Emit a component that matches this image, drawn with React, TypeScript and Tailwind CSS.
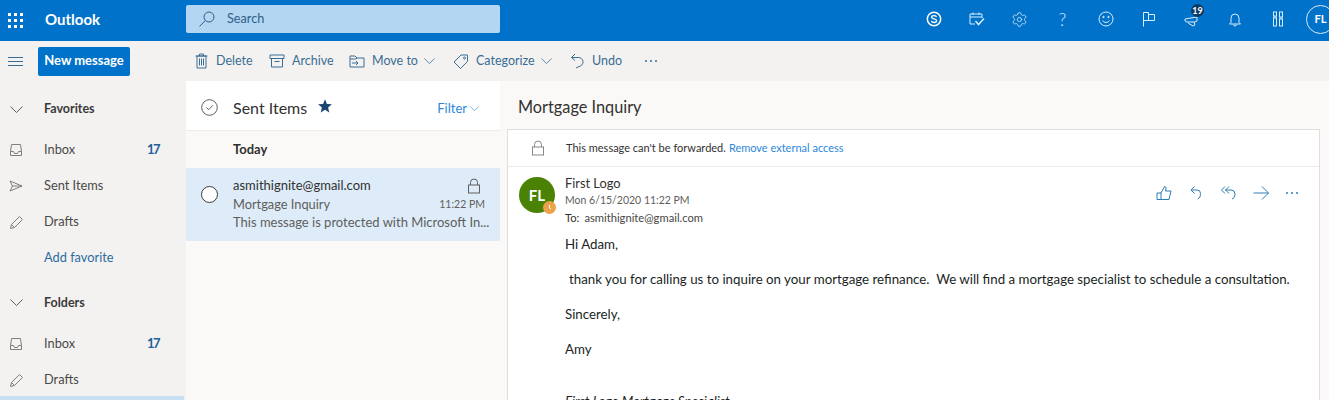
import React from "react";
import { Settings } from "lucide-react";

const S = ({ w = 18, h = 18, vb = "0 0 18 18", c = "", children }: { w?: number; h?: number; vb?: string; c?: string; children: React.ReactNode }) => (
  <svg width={w} height={h} viewBox={vb} fill="none" stroke="currentColor" strokeWidth={1} className={`shrink-0 ${c}`}>
    {children}
  </svg>
);

const Chevron = ({ w = 14, c = "" }: { w?: number; c?: string }) => (
  <svg width={w} height={w / 2 + 1} viewBox="0 0 14 8" fill="none" stroke="currentColor" strokeWidth={1} className={`shrink-0 ${c}`}>
    <path d="M0.5 0.5 L7 7 L13.5 0.5" />
  </svg>
);

const InboxIcon = () => (
  <S w={14} h={14} vb="0 0 14 14" c="text-[#807e7c]">
    <path d="M2.500 1.500h9l1 7v4h-11v-4z" />
    <path d="M1.500 8.500h3l1 2h3l1-2h3" />
  </S>
);
const SentIcon = () => (
  <S w={14} h={14} vb="0 0 14 14" c="text-[#807e7c]">
    <path d="M1 2l12 5-12 5 2.500-5z" />
    <path d="M3.500 7h9.500" />
  </S>
);
const PencilIcon = () => (
  <S w={15} h={15} vb="0 0 15 15" c="text-[#807e7c]">
    <path d="M1.500 13.500l1-4L10.500 1.500l3 3-8 8z" />
    <path d="M2.500 9.500l3 3" />
  </S>
);
const LockIcon = ({ c = "" }: { c?: string }) => (
  <S w={14} h={16} vb="0 0 14 16" c={c}>
    <rect x="1.500" y="7" width="11" height="8" />
    <path d="M3.500 7V4.500a3.500 3.500 0 0 1 7 0V7" />
  </S>
);

function NavRow({ icon, label, count, link }: { icon?: React.ReactNode; label: string; count?: string; link?: boolean }) {
  return (
    <div className="flex h-9 items-center pl-[9px] pr-[27px] pt-[4px]">
      <span className="flex w-[35px] items-center">{icon}</span>
      <span className={`flex-1 text-[12.8px] ${link ? "text-[#2b6c9f]" : "text-[#4a4948]"}`}>{label}</span>
      {count && <span className="text-[13px] font-bold tracking-[-1.5px] text-[#1f6199]">{count}</span>}
    </div>
  );
}

function Tool({ icon, label, chevron, w }: { icon: React.ReactNode; label: string; chevron?: boolean; w: string }) {
  return (
    <div className={`flex items-center text-[#3a6d94] ${w}`}>
      <span className="mr-[7px] flex w-[16px] justify-center">{icon}</span>
      <span className="text-[12.5px]">{label}</span>
      {chevron && <Chevron w={11} c="ml-[6px]" />}
    </div>
  );
}

const HeaderIcon = ({ children, w = "w-[43px]" }: { children: React.ReactNode; w?: string }) => (
  <div className={`relative flex h-full items-center justify-center text-[#d8ecfa] ${w}`}>{children}</div>
);

export default function App() {
  return (
    <div className="flex h-[400px] w-[1329px] flex-col overflow-hidden bg-[#faf9f8] font-['Lato','Open_Sans',sans-serif] text-[#323130]">
      {/* Top bar */}
      <header className="flex h-[41px] shrink-0 items-center overflow-hidden bg-[#0072c9] text-white">
        <div className="flex w-[186px] items-center">
          <div className="ml-[8px] grid grid-cols-3 gap-[3px]">
            {Array.from({ length: 9 }).map((_, i) => (
              <span key={i} className="h-[3px] w-[3px] bg-white" />
            ))}
          </div>
          <span className="ml-[22px] pb-[2px] text-[15px] font-bold leading-none">Outlook</span>
        </div>
        <div className="mb-[3px] flex h-[28px] w-[314px] items-center rounded-[2px] bg-[#b3d6f2] pl-[12px] text-[#2f5f88]">
          <S w={18} h={18} vb="0 0 18 18">
            <circle cx="11" cy="7" r="5" />
            <path d="M7.300 10.500L1.500 16.500" />
          </S>
          <span className="ml-[11px] text-[12.7px]">Search</span>
        </div>
        <div className="ml-auto mr-[-1px] flex h-full items-center pb-[3px]">
          <HeaderIcon>
            <S w={16} h={16} vb="0 0 16 16" c="text-white">
              <circle cx="8" cy="8" r="6.700" strokeWidth={1.5} />
              <path d="M10.600 5.800c-.7-.9-1.600-1.200-2.700-1.200-1.300 0-2.300.6-2.300 1.600 0 2.200 5 1.300 5 3.600 0 1-1 1.700-2.500 1.700-1.300 0-2.300-.5-2.900-1.400" strokeWidth={1.3} />
            </S>
          </HeaderIcon>
          <HeaderIcon>
            <S w={16} h={16} vb="0 0 16 16">
              <path d="M6 13H1V3h12v4" />
              <path d="M1 6h12M4 1.500V4M10 1.500V4" />
              <path d="M6.500 10l3 3.500 5.500-6" strokeWidth={1.5} />
            </S>
          </HeaderIcon>
          <HeaderIcon>
            <Settings size={17} strokeWidth={1.1} />
          </HeaderIcon>
          <HeaderIcon>
            <span className="text-[18px] font-light leading-none">?</span>
          </HeaderIcon>
          <HeaderIcon>
            <S w={16} h={16} vb="0 0 16 16">
              <circle cx="8" cy="8" r="7" />
              <circle cx="5.500" cy="6" r=".7" fill="currentColor" />
              <circle cx="10.500" cy="6" r=".7" fill="currentColor" />
              <path d="M4.500 9.500c1.600 2.600 5.400 2.600 7 0" />
            </S>
          </HeaderIcon>
          <HeaderIcon>
            <S w={14} h={16} vb="0 0 14 16">
              <path d="M1.500 15.500V1.500h5v2h6v6h-6v-8M1.500 9.500h5" />
            </S>
          </HeaderIcon>
          <HeaderIcon>
            <S w={16} h={12} vb="0 0 16 12" c="mt-[3px]">
              <path d="M1 4l12-2v4l-2 1H3L1 6z" />
              <path d="M4 8l5 3 2-1-1-3" />
            </S>
            <span className="absolute left-[21px] top-[4px] flex h-[13px] w-[13px] items-center justify-center rounded-full bg-[#0b3a66] text-[9px] font-bold text-white">
              19
            </span>
          </HeaderIcon>
          <HeaderIcon>
            <S w={14} h={15} vb="0 0 14 15">
              <path d="M3 10.500V6a4 4 0 0 1 8 0v4.500l1.500 1.500h-11z" />
              <path d="M5.500 12.500a1.500 1.500 0 0 0 3 0" />
            </S>
          </HeaderIcon>
          <HeaderIcon>
            <S w={12} h={16} vb="0 0 12 16">
              <rect x="1.500" y="1" width="3" height="4" />
              <rect x="1.500" y="7" width="3" height="8" />
              <rect x="7.500" y="1" width="3" height="5" />
              <rect x="7.500" y="8" width="3" height="7" />
              <path d="M1 6h4M7 7h4" />
            </S>
          </HeaderIcon>
          <div className="relative ml-[7px] mr-[-5px] flex h-[29px] w-[29px] items-center justify-center rounded-full border border-[#d8ecfa] text-[11px] font-bold text-white">
            FL
          </div>
        </div>
      </header>

      {/* Command bar */}
      <div className="flex h-[40px] shrink-0 items-center bg-[#f3f2f1]">
        <div className="flex w-[186px] items-center">
          <div className="ml-[8px] flex w-[15px] flex-col gap-[3px]">
            <span className="h-px w-full bg-[#3a6d94]" />
            <span className="h-px w-full bg-[#3a6d94]" />
            <span className="h-px w-full bg-[#3a6d94]" />
          </div>
          <button className="ml-[15px] flex h-[29px] w-[92px] items-center justify-center rounded-[2px] bg-[#0072c9] pb-[1px] text-[13px] font-bold text-white">
            New message
          </button>
        </div>
        <div className="flex items-center pl-[7px]">
          <Tool
            w="w-[76px]"
            label="Delete"
            icon={
              <S w={13} h={16} vb="0 0 13 16">
                <path d="M2 3h9v12H2zM.5 3h12M4.500 3V1h4v2" />
                <path d="M4.500 5.500v7M6.500 5.500v7M8.500 5.500v7" />
              </S>
            }
          />
          <Tool
            w="w-[80px]"
            label="Archive"
            icon={
              <S w={16} h={14} vb="0 0 16 14">
                <path d="M1 1h14v3.500H1zM2.500 4.500v8.500h11V4.500M5.500 7.500h5" />
              </S>
            }
          />
          <Tool
            w="w-[104px]"
            chevron
            label="Move to"
            icon={
              <S w={16} h={13} vb="0 0 16 13">
                <path d="M1 12V1h5l2 2h7v9zM1 4h6l1-1" />
                <path d="M3 8h6M7 6l2 2-2 2" />
              </S>
            }
          />
          <Tool
            w="w-[116px]"
            chevron
            label="Categorize"
            icon={
              <S w={16} h={15} vb="0 0 16 15">
                <path d="M1 8l7-7h6.500v6.500l-7 7z" />
                <circle cx="11.500" cy="4" r="1" />
              </S>
            }
          />
          <Tool
            w="w-[74px]"
            label="Undo"
            icon={
              <S w={14} h={16} vb="0 0 14 16">
                <path d="M5 1L1.500 4.500 5 7.500" />
                <path d="M1.500 4.500h6.500a4.500 4.500 0 0 1 1 9l-3 1.500" />
              </S>
            }
          />
          <span className="ml-[2px] flex gap-[3px]">
            {[0, 1, 2].map((i) => (
              <span key={i} className="h-[2px] w-[2px] rounded-full bg-[#3a6d94]" />
            ))}
          </span>
        </div>
      </div>

      <div className="flex min-h-0 flex-1">
        {/* Left nav */}
        <nav className="flex w-[186px] shrink-0 flex-col overflow-hidden bg-[#f3f2f1]">
          <div className="flex h-[55px] shrink-0 items-center pl-[10px] pt-[2px]">
            <Chevron w={13} c="text-[#555453]" />
            <span className="ml-[21px] text-[12.5px] font-bold text-[#3b3a39]">Favorites</span>
          </div>
          <div className="mt-[-6px]">
            <NavRow icon={<InboxIcon />} label="Inbox" count="17" />
            <NavRow icon={<SentIcon />} label="Sent Items" />
            <NavRow icon={<PencilIcon />} label="Drafts" />
            <NavRow label="Add favorite" link />
          </div>
          <div className="mt-[4px] flex h-[46px] shrink-0 items-center pl-[10px] pt-[4px]">
            <Chevron w={13} c="text-[#555453]" />
            <span className="ml-[21px] text-[12.5px] font-bold text-[#3b3a39]">Folders</span>
          </div>
          <div>
            <NavRow icon={<InboxIcon />} label="Inbox" count="17" />
            <NavRow icon={<PencilIcon />} label="Drafts" />
          </div>
          <div className="h-[8px] w-[184px] shrink-0 bg-[#c7e0f4]" />
        </nav>

        {/* Message list */}
        <section className="flex w-[314px] shrink-0 flex-col bg-[#faf9f8]">
          <div className="flex h-[50px] shrink-0 items-center border-b border-[#edebe9] bg-white pl-[15px] pr-[21px] pt-[4px]">
            <S w={17} h={17} vb="0 0 17 17" c="text-[#605e5c]">
              <circle cx="8.500" cy="8.500" r="7.800" />
              <path d="M5.500 8.500l2.200 2.200 4-4.200" />
            </S>
            <span className="ml-[15px] text-[16px] leading-none text-[#323130]">Sent Items</span>
            <svg width="14" height="14" viewBox="0 0 14 14" className="ml-[11px] mt-[-3px] text-[#17456e]" fill="currentColor">
              <path d="M7 .3l1.900 4.600 5 .4-3.800 3.200 1.200 4.900L7 10.800l-4.300 2.600 1.200-4.900L.1 5.300l5-.4z" />
            </svg>
            <span className="ml-auto pt-[2px] text-[13px] text-[#2b88d8]">Filter</span>
            <Chevron w={9} c="ml-[3px] mt-[2px] text-[#2b88d8]" />
          </div>
          <div className="flex h-[37px] shrink-0 items-center pl-[47px] text-[13px] font-bold text-[#323130]">Today</div>
          <div className="flex h-[73px] shrink-0 bg-[#deecf9] pl-[15px] pr-[15px]">
            <div className="mt-[18px] h-[17px] w-[17px] shrink-0 rounded-full border border-[#3b3a39] bg-white" />
            <div className="ml-[15px] min-w-0 flex-1 pt-[9px]">
              <div className="flex h-[18px] items-center justify-between">
                <span className="text-[13px] text-[#323130]">asmithignite@gmail.com</span>
                <LockIcon c="mr-[4px] text-[#605e5c]" />
              </div>
              <div className="flex h-[20px] items-center justify-between">
                <span className="text-[12.8px] text-[#605e5c]">Mortgage Inquiry</span>
                <span className="text-[10.5px] text-[#605e5c]">11:22 PM</span>
              </div>
              <div className="whitespace-nowrap text-[13px] leading-[15px] text-[#605e5c]">
                This message is protected with Microsoft In...
              </div>
            </div>
          </div>
        </section>

        {/* Reading pane */}
        <main className="flex min-w-0 flex-1 flex-col overflow-hidden bg-[#faf9f8] pl-[7px] pr-[9px]">
          <div className="flex h-[48px] shrink-0 items-center pl-[11px] pt-[4px] text-[16.3px] text-[#323130]">
            Mortgage Inquiry
          </div>
          <div className="flex-1 border border-[#e1dfdd] bg-white">
            <div className="flex h-[37px] items-center border-b border-[#edebe9] pl-[23px]">
              <LockIcon c="text-[#8a8886]" />
              <span className="ml-[21px] text-[11px] text-[#323130]">This message can't be forwarded.</span>
              <span className="ml-[3px] text-[11px] text-[#2b88d8]">Remove external access</span>
            </div>
            <div className="flex pl-[11px] pt-[10px]">
              <div className="relative flex h-[36px] w-[36px] shrink-0 items-center justify-center rounded-full bg-[#498205] text-[15px] font-bold text-white">
                FL
                <span className="absolute bottom-[-1px] right-[-1px] flex h-[13px] w-[13px] items-center justify-center rounded-full bg-[#eaa34a]">
                  <svg width="7" height="7" viewBox="0 0 7 7" fill="none" stroke="white" strokeWidth="1">
                    <path d="M3.500 1v3l1.500 1" />
                  </svg>
                </span>
              </div>
              <div className="ml-[10px] mt-[-3px] min-w-0 flex-1">
                <div className="flex">
                  <div className="flex-1">
                    <div className="text-[12.8px] leading-[18px] text-[#323130]">First Logo</div>
                    <div className="text-[10.5px] leading-[17px] text-[#605e5c]">Mon 6/15/2020 11:22 PM</div>
                    <div className="text-[11.2px] leading-[17px] text-[#323130]">
                      To:<span className="ml-[5px] text-[#484644]">asmithignite@gmail.com</span>
                    </div>
                  </div>
                  <div className="mr-[21px] mt-[10px] flex h-[17px] items-center gap-[16px] text-[#2c7cb5]">
                    <S w={16} h={16} vb="0 0 16 16">
                      <path d="M1 8h4v6.500H1zM5 8l3.500-6.500c1.500 0 1.800 1 1.400 2.500L9.500 6H15l-2 8.500H5" />
                    </S>
                    <S w={16} h={16} vb="0 0 16 16">
                      <path d="M6.500 1.500L3 5l3.500 3.500" />
                      <path d="M3 5h6a3.500 3.500 0 0 1 3.500 3.500v1a4.500 4.500 0 0 1-3 4.500" />
                    </S>
                    <S w={17} h={16} vb="0 0 17 16">
                      <path d="M5 1.500L1.500 5 5 8.500M9 1.500L5.500 5 9 8.500" />
                      <path d="M5.500 5H11a4 4 0 0 1 4 4v1a4.500 4.500 0 0 1-3 4" />
                    </S>
                    <S w={16} h={14} vb="0 0 16 14">
                      <path d="M.5 7h15M9 .5L15.500 7 9 13.500" />
                    </S>
                    <span className="ml-[1px] flex gap-[3px]">
                      {[0, 1, 2].map((i) => (
                        <span key={i} className="h-[2px] w-[2px] rounded-full bg-[#2c7cb5]" />
                      ))}
                    </span>
                  </div>
                </div>
                <div className="mt-[10px] text-[13.3px] leading-[17px] text-[#201f1e]">
                  <p className="mb-[18px]">Hi Adam,</p>
                  <p className="mb-[18px] whitespace-nowrap pl-[4px]">
                    thank you for calling us to inquire on your mortgage refinance.&nbsp; We will find a mortgage specialist to schedule a consultation.
                  </p>
                  <p className="mb-[18px]">Sincerely,</p>
                  <p className="mb-[35px]">Amy</p>
                  <p className="italic">First Logo Mortgage Specialist</p>
                </div>
              </div>
            </div>
          </div>
        </main>
      </div>
    </div>
  );
}
